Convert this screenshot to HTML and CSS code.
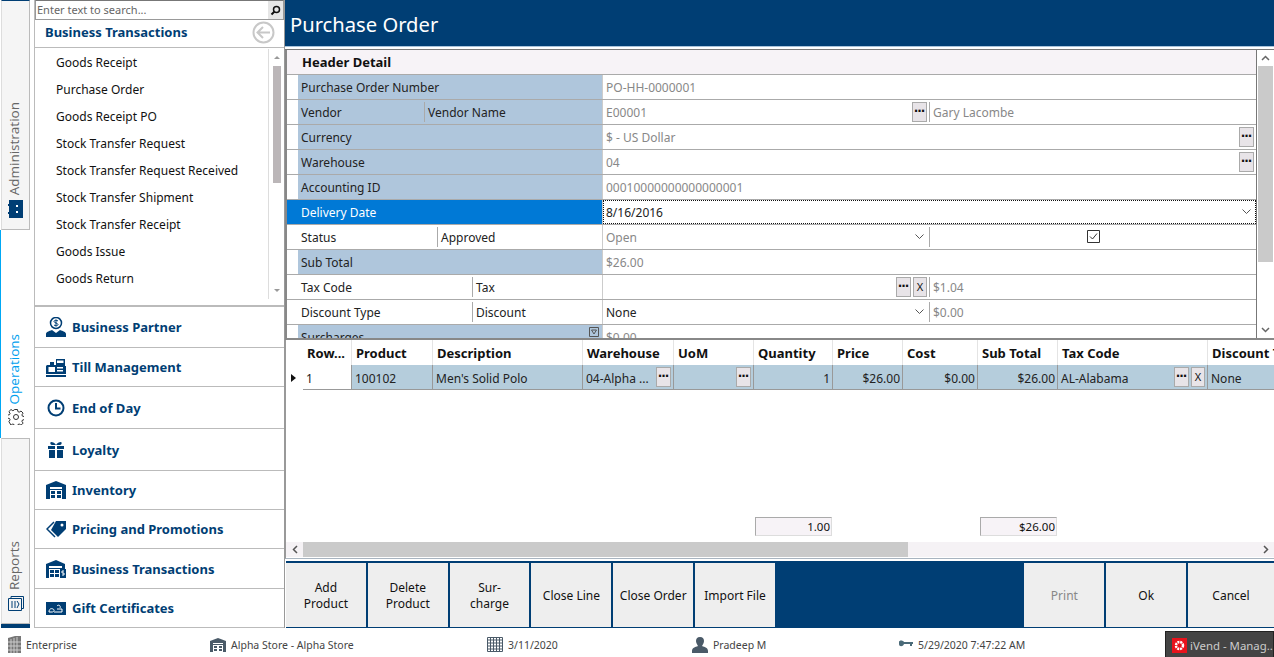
FILE: index.html
```html
<!DOCTYPE html>
<html lang="en">
<head>
<meta charset="utf-8">
<title>Purchase Order</title>
<link rel="stylesheet" href="styles.css">
</head>
<body>
<div class="app">
  <nav class="rail">
    <div class="tab tab-admin">
      <svg class="tab-icon" width="15" height="18" viewBox="0 0 15 18"><path fill="#003e74" d="M1 0h14v18H1z"/><path fill="#003e74" d="M0 4h2v2H0zM0 12h2v2H0z"/><path fill="#fff" d="M8 5h2v2H8zM8 11h2v2H8z"/></svg>
      <span class="tab-label">Administration</span>
    </div>
    <div class="tab-active">
      <svg class="tab-icon" width="16" height="16" viewBox="0 0 16 16" fill="none" stroke="#333"><circle cx="8" cy="8" r="2.500"/><path d="M6.500.5h3l.4 2.100 1.300.6 1.800-1.200 2.100 2.100-1.200 1.800.6 1.300 2 .4v3l-2 .4-.6 1.300 1.200 1.800-2.100 2.100-1.800-1.200-1.300.6-.4 1.800h-3l-.4-1.800-1.300-.6-1.800 1.200L.9 12.600l1.200-1.800-.6-1.300-2-.4v-3l2-.4.6-1.300L.9 2.600 3 .5l1.800 1.200 1.300-.6z"/></svg>
      <span class="tab-label tab-label-active">Operations</span>
    </div>
    <div class="tab tab-reports">
      <svg class="tab-icon" width="16" height="15" viewBox="0 0 16 15" fill="none" stroke="#003e74"><path d="M.5 2.500h13v12H.5zM3 2.500V.5h12.500v12H14"/><path d="M4 5v7M7 5v7M9 5l2 3-2 4"/></svg>
      <span class="tab-label">Reports</span>
    </div>
    <div class="rail-end"></div>
  </nav>

  <aside class="side">
    <div class="search">
      <span class="search-text">Enter text to search...</span>
      <span class="search-btn"><svg width="11" height="11" viewBox="0 0 11 11" fill="none" stroke="#111" stroke-width="1.500"><circle cx="6.500" cy="4.500" r="3"/><path d="M4.500 6.500 1.500 9.500" stroke-width="2"/></svg></span>
    </div>
    <div class="side-head">
      <span class="side-title">Business Transactions</span>
      <svg class="back" width="23" height="23" viewBox="0 0 23 23" fill="none" stroke="#c8c8c8" stroke-width="2"><circle cx="11.500" cy="11.500" r="10"/><path d="M18 11.500H6M11 6l-5.500 5.500L11 17"/></svg>
    </div>
    <div class="side-list">
      <ul class="items">
        <li>Goods Receipt</li>
        <li>Purchase Order</li>
        <li>Goods Receipt PO</li>
        <li>Stock Transfer Request</li>
        <li>Stock Transfer Request Received</li>
        <li>Stock Transfer Shipment</li>
        <li>Stock Transfer Receipt</li>
        <li>Goods Issue</li>
        <li>Goods Return</li>
      </ul>
      <div class="vscroll">
        <span class="tri tri-up"></span>
        <span class="vthumb"></span>
        <span class="tri tri-down"></span>
      </div>
    </div>
    <div class="accordion">
      <div class="acc"><svg width="20" height="20" viewBox="0 0 20 20"><path fill="#003e74" d="M0 20v-3c0-2 3-3 6-4l4 3 4-3c3 1 6 2 6 4v3z"/><circle cx="10" cy="6" r="5.500" fill="none" stroke="#003e74" stroke-width="1.500"/><path fill="none" stroke="#003e74" d="M12 4c-1-1-4-1-4 .5S12 6 12 7.500 9 9 8 8M10 2.500v7"/></svg><span>Business Partner</span></div>
      <div class="acc"><svg width="20" height="19" viewBox="0 0 20 19"><path fill="#003e74" d="M1 7h3V4h4v3h2V1h9v7h1v8H0V8zM0 17h20v2H0z"/><path fill="#fff" d="M11 2.500h6.500V5H11zM2.500 9H9v5H2.500zM11 9h6v1.500h-6zM11 12h6v1.500h-6z"/></svg><span>Till Management</span></div>
      <div class="acc"><svg width="18" height="18" viewBox="0 0 18 18" class="acc-clock" fill="none" stroke="#003e74" stroke-width="2"><circle cx="9" cy="9" r="7.500"/><path d="M9 4v5.500h4.500"/></svg><span>End of Day</span></div>
      <div class="acc"><svg width="16" height="16" viewBox="0 0 16 16" class="acc-gift"><path fill="#003e74" d="M0 4h7v3H0zM9 4h7v3H9zM1 8h6v8H1zM9 8h6v8H9zM3 0c2 0 4 1 5 3 1-2 3-3 5-3 1 0 1 3-1 3H4C2 3 2 0 3 0z"/></svg><span>Loyalty</span></div>
      <div class="acc"><svg width="20" height="18" viewBox="0 0 20 18"><path fill="#003e74" d="M10 0l10 4v14H0V4z"/><path fill="#fff" d="M4 6h12v2H4zM4 9h12v9H4z"/><path fill="#003e74" d="M5 10h4v3H5zM11 10h4v3h-4zM5 14h4v3H5zM11 14h4v3h-4z"/></svg><span>Inventory</span></div>
      <div class="acc"><svg width="20" height="17" viewBox="0 0 20 17"><path fill="#003e74" d="M10 0h10v8l-8 8-7-7z"/><circle cx="16" cy="4" r="1.500" fill="#fff"/><path fill="none" stroke="#003e74" stroke-width="1.500" d="M8 1 1 8l8 8"/></svg><span>Pricing and Promotions</span></div>
      <div class="acc"><svg width="20" height="18" viewBox="0 0 20 18"><path fill="#003e74" d="M10 0l9 4v5h1v9H0V4z"/><path fill="#fff" d="M3 6h13v2H3zM3 9h11v9H3z"/><path fill="#003e74" d="M4 10h4v3H4zM9 10h4v3H9zM4 14h4v3H4zM9 14h4v3H9z"/><path fill="none" stroke="#fff" d="M18 11h-2v2h2v2h-2"/></svg><span>Business Transactions</span></div>
      <div class="acc"><svg width="20" height="13" viewBox="0 0 20 13"><path fill="#003e74" d="M0 0h20v13H0z"/><path fill="none" stroke="#fff" d="M3 10c0-3 2-4 4-3s1 3-1 3H3zM8 10h8V7h-5M11 4c2-2 4 0 3 2"/></svg><span>Gift Certificates</span></div>
    </div>
  </aside>

  <main class="main">
    <h1 class="title">Purchase Order</h1>
    <div class="title-line"></div>

    <section class="form-wrap">
      <div class="form">
        <div class="form-head">Header Detail</div>
        <div class="row"><div class="lab shade">Purchase Order Number</div><div class="val"><span class="val-main">PO-HH-0000001</span></div></div>
        <div class="row">
          <div class="lab shade lab-split"><span class="part-vendor">Vendor</span><span class="part-b">Vendor Name</span></div>
          <div class="val val-split"><span class="val-main">E00001</span><span class="dots">···</span><span class="val-side">Gary Lacombe</span></div>
        </div>
        <div class="row"><div class="lab shade">Currency</div><div class="val"><span class="val-main">$ - US Dollar</span><span class="dots">···</span></div></div>
        <div class="row"><div class="lab shade">Warehouse</div><div class="val"><span class="val-main">04</span><span class="dots">···</span></div></div>
        <div class="row"><div class="lab shade">Accounting ID</div><div class="val"><span class="val-main">00010000000000000001</span></div></div>
        <div class="row row-sel">
          <div class="lab lab-sel">Delivery Date</div>
          <div class="val val-focus"><span class="val-main val-dark">8/16/2016</span><svg class="chev" width="9" height="5" viewBox="0 0 9 5" fill="none" stroke="#555"><path d="M.5.5l4 4 4-4"/></svg></div>
        </div>
        <div class="row">
          <div class="lab lab-split"><span class="part-status">Status</span><span class="part-b">Approved</span></div>
          <div class="val val-split"><span class="val-main">Open</span><svg class="chev" width="9" height="5" viewBox="0 0 9 5" fill="none" stroke="#555"><path d="M.5.5l4 4 4-4"/></svg><span class="val-side val-check"><svg width="13" height="13" viewBox="0 0 13 13" fill="none" stroke="#333"><path d="M.5.5h12v12H.5z"/><path d="M3 6.500l2.500 2.500L10 3.500"/></svg></span></div>
        </div>
        <div class="row"><div class="lab shade">Sub Total</div><div class="val"><span class="val-main">$26.00</span></div></div>
        <div class="row">
          <div class="lab lab-split"><span class="part-tax">Tax Code</span><span class="part-b">Tax</span></div>
          <div class="val val-split"><span class="val-main"></span><span class="dots">···</span><span class="xbtn">X</span><span class="val-side">$1.04</span></div>
        </div>
        <div class="row">
          <div class="lab lab-split"><span class="part-tax">Discount Type</span><span class="part-b">Discount</span></div>
          <div class="val val-split"><span class="val-main val-dark">None</span><svg class="chev" width="9" height="5" viewBox="0 0 9 5" fill="none" stroke="#555"><path d="M.5.5l4 4 4-4"/></svg><span class="val-side">$0.00</span></div>
        </div>
        <div class="row">
          <div class="lab shade lab-filter">Surcharges<svg class="filter" width="10" height="10" viewBox="0 0 10 10" fill="none" stroke="#555"><path d="M.5.5h9v9h-9zM2.500 3h5L5 7z"/></svg></div>
          <div class="val"><span class="val-main">$0.00</span></div>
        </div>
      </div>
      <div class="form-scroll">
        <svg width="9" height="6" viewBox="0 0 9 6" fill="none" stroke="#666" stroke-width="1.500"><path d="M1 5l3.500-3.500L8 5"/></svg>
        <span class="form-thumb"></span>
        <svg class="form-scroll-down" width="9" height="6" viewBox="0 0 9 6" fill="none" stroke="#666" stroke-width="1.500"><path d="M1 1l3.500 3.500L8 1"/></svg>
      </div>
    </section>

    <section class="table-wrap">
      <div class="tbl tbl-head">
        <div class="th th-gutter"></div>
        <div class="th">Row...</div>
        <div class="th">Product</div>
        <div class="th">Description</div>
        <div class="th">Warehouse</div>
        <div class="th">UoM</div>
        <div class="th">Quantity</div>
        <div class="th">Price</div>
        <div class="th">Cost</div>
        <div class="th">Sub Total</div>
        <div class="th">Tax Code</div>
        <div class="th">Discount Type</div>
      </div>
      <div class="tbl tbl-row">
        <div class="td-gutter"><span class="marker"></span></div>
        <div class="td td-white">1</div>
        <div class="td">100102</div>
        <div class="td">Men's Solid Polo</div>
        <div class="td td-btn"><span class="td-grow">04-Alpha ...</span><span class="dots">···</span></div>
        <div class="td td-btn"><span class="td-grow"></span><span class="dots">···</span></div>
        <div class="td td-num">1</div>
        <div class="td td-num">$26.00</div>
        <div class="td td-num">$0.00</div>
        <div class="td td-num">$26.00</div>
        <div class="td td-btn"><span class="td-grow">AL-Alabama</span><span class="dots">···</span><span class="xbtn">X</span></div>
        <div class="td">None</div>
      </div>
      <div class="tbl-space"></div>
      <div class="tbl tbl-totals">
        <div class="total total-qty">1.00</div>
        <div class="total total-sub">$26.00</div>
      </div>
      <div class="hscroll">
        <span class="harrow"><svg width="6" height="9" viewBox="0 0 6 9" fill="none" stroke="#555" stroke-width="1.500"><path d="M5 1 1.500 4.500 5 8"/></svg></span>
        <span class="hthumb"></span>
        <span class="htrack"><svg width="6" height="9" viewBox="0 0 6 9" fill="none" stroke="#555" stroke-width="1.500"><path d="M1 1l3.500 3.500L1 8"/></svg></span>
      </div>
    </section>

    <div class="toolbar">
      <button class="tbtn">Add<br>Product</button>
      <button class="tbtn">Delete<br>Product</button>
      <button class="tbtn">Sur-<br>charge</button>
      <button class="tbtn">Close Line</button>
      <button class="tbtn">Close Order</button>
      <button class="tbtn">Import File</button>
      <span class="tool-gap"></span>
      <button class="tbtn tbtn-off">Print</button>
      <button class="tbtn">Ok</button>
      <button class="tbtn tbtn-last">Cancel</button>
    </div>
  </main>

  <footer class="status">
    <div class="stat"><svg width="13" height="17" viewBox="0 0 13 17"><path fill="#777" d="M0 2l7-2h6v17H0z"/><path stroke="#ccc" d="M3 3v14M6 2v15M9 1v16M0 6h13M0 10h13M0 14h13"/></svg><span>Enterprise</span></div>
    <div class="stat"><svg width="16" height="14" viewBox="0 0 16 14"><path fill="#4a5a68" d="M8 0l8 3v11H0V3z"/><path fill="#fff" d="M3 5h10v1H3zM3 7h10v7H3z"/><path fill="#4a5a68" d="M4 8h3v2H4zM9 8h3v2H9zM4 11h3v2H4zM9 11h3v2H9z"/></svg><span>Alpha Store - Alpha Store</span></div>
    <div class="stat"><svg width="16" height="15" viewBox="0 0 16 15" fill="none" stroke="#4a5a68"><path d="M.5.5h15v14H.5z"/><path d="M.5 3h15M.5 6h15M.5 9h15M.5 12h15M3.500 .5v14M6.500 .5v14M9.500 .5v14M12.500 .5v14"/></svg><span>3/11/2020</span></div>
    <div class="stat"><svg width="16" height="16" viewBox="0 0 16 16"><path fill="#4a5a68" d="M8 0c3 0 4 2 4 4s-1 3-2 5c3 1 6 2 6 5v2H0v-2c0-3 3-4 6-5-1-2-2-3-2-5s1-4 4-4z"/></svg><span>Pradeep M</span></div>
    <div class="stat"><svg width="14" height="9" viewBox="0 0 14 9"><path fill="#4a6a78" d="M0 2c0-2 4-2 5 0h9v2h-1v2h-2V4H5c-1 3-5 3-5 0z"/></svg><span>5/29/2020 7:47:22 AM</span></div>
    <div class="task">
      <svg class="task-icon" width="15" height="15" viewBox="0 0 15 15"><path fill="#e8131c" d="M0 0h15v15H0z"/><circle cx="7.500" cy="7.500" r="3.500" fill="none" stroke="#fff" stroke-width="2.500" stroke-dasharray="2 .8"/></svg>
      <span>iVend - Manag...</span>
    </div>
  </footer>
</div>
</body>
</html>
```
FILE: styles.css
```css
* { box-sizing: border-box; }
html, body { margin: 0; padding: 0; height: 100%; overflow: hidden; background: #fff; }
body { font: 12px "Noto Sans", sans-serif; color: #111; }

.app {
  width: 1274px; height: 657px;
  display: grid;
  grid-template-columns: 34px 251px 989px;
  grid-template-rows: 628px 29px;
}

/* rail */
.rail { display: flex; flex-direction: column; background: #fff; }
.tab {
  width: 29px; margin-left: 1px;
  background: #f5f5f5;
  border: 1px solid #bbb; border-left-color: #ddd;
  display: flex; flex-direction: column-reverse; align-items: center; gap: 5px;
  padding-bottom: 11px;
}
.tab-admin { height: 230px; border-top: 1px solid #003e74; }
.tab-reports { height: 186px; padding-bottom: 12px; gap: 6px; }
.tab-active {
  width: 30px; height: 208px;
  border-left: 1px solid #00a8f5;
  display: flex; flex-direction: column-reverse; align-items: center; gap: 5px;
  padding-bottom: 13px;
}
.tab-icon { flex: none; }
.tab-label {
  writing-mode: vertical-rl; transform: rotate(180deg);
  font: 400 13.500px "Open Sans", sans-serif; color: #666;
  margin-right: 3px;
}
.tab-label-active { color: #00a0ee; }
.rail-end { width: 29px; margin-left: 1px; height: 4px; background: #003e74; }

/* side */
.side { display: flex; flex-direction: column; border-left: 1px solid #bbb; border-right: 1px solid #999; }
.search { height: 20px; display: flex; border: 1px solid #999; border-top-color: #777; }
.search-text { flex: 1; padding-left: 1px; line-height: 18px; color: #666; font-size: 11px; }
.search-btn { width: 15px; background: #e6e6e6; display: flex; align-items: center; justify-content: center; }
.side-head {
  height: 28px; display: flex; align-items: center; justify-content: space-between;
  padding: 0 9px 2px 10px; border-bottom: 1px solid #bbb;
}
.side-title { font-weight: 700; font-size: 13px; color: #003e74; margin-bottom: 2px; }
.side-list { height: 259px; display: flex; padding-top: 1px; border-bottom: 2px solid #bbb; }
.items { flex: 1; list-style: none; margin: 0; padding: 0 0 0 21px; }
.items li { height: 27px; line-height: 27px; }
.vscroll {
  width: 16px; height: 250px;
  display: flex; flex-direction: column; align-items: center;
  border-left: 1px solid #ddd;
}
.tri { width: 0; height: 0; border-left: 3px solid transparent; border-right: 3px solid transparent; margin: 7px 0; }
.tri-up { border-bottom: 3px solid #999; }
.tri-down { border-top: 3px solid #999; margin-top: auto; }
.vthumb { width: 8px; height: 117px; background: #bbb6b8; }
.accordion {
  flex: 1; display: grid;
  grid-template-rows: 41px 39px 42px 42px 39px 39px 40px 39px;
}
.acc {
  display: flex; align-items: center; gap: 6px;
  padding-left: 11px;
  border-bottom: 1px solid #bbb;
  font-weight: 700; font-size: 13px; color: #003e74;
}
.acc-clock { margin: 0 1px; }
.acc-gift { margin: 0 2px; }

/* main */
.main { display: flex; flex-direction: column; min-width: 0; }
.title {
  margin: 0; height: 46px; padding-left: 5px;
  background: #003e74; color: #fff;
  font: 400 20.200px/49px "Noto Sans", sans-serif;
}
.title-line { height: 3px; background: linear-gradient(#a9c4dc 1px, #fff 1px); }

.form-wrap { height: 291px; display: flex; border-top: 1px solid #777; border-bottom: 2px solid #888; }
.form { width: 972px; flex: none; overflow: hidden; border-left: 2px solid #888; border-right: 1px solid #777; }
.form-head {
  height: 25px; padding-left: 15px; line-height: 24px;
  background: #f7f3f7; font-weight: 700; font-size: 13px;
  border-bottom: 1px solid #aaa;
}
.row { height: 25px; display: flex; border-bottom: 1px solid #aaa; }
.lab {
  width: 316px; flex: none; height: 24px; line-height: 26px;
  padding-left: 14px; border-right: 1px solid #ccc;
  display: flex; color: #222;
}
.shade { background: linear-gradient(90deg, #fff 11px, #afc6dc 11px); }
.lab-sel { background: #0079d6; color: #fff; }
.lab-split span { display: block; height: 20px; line-height: 22px; margin-top: 2px; }
.part-vendor { width: 123px; }
.part-status { width: 136px; }
.part-tax { width: 171px; }
.part-b { border-left: 1px solid #aaa; padding-left: 3px; }
.lab-filter { position: relative; }
.filter { position: absolute; right: 3px; top: 2px; }
.val {
  flex: 1; min-width: 0; display: flex; align-items: center;
  padding: 0 2px 1px 3px; color: #888;
}
.val-main { flex: 1; padding-top: 2px; }
.val-dark { color: #222; }
.val-focus { outline: 1px dotted #111; outline-offset: -1px; padding-right: 5px; }
.val-split .val-side {
  flex: none; width: 325px; height: 20px; line-height: 22px; margin-left: 2px;
  padding-left: 3px; border-left: 1px solid #aaa;
}
.val-check { display: flex; align-items: center; justify-content: center; }
.val-split .chev { margin-right: 3px; }
.dots, .xbtn {
  flex: none; height: 20px; background: #e8e4e8; border: 1px solid #aaa;
  color: #111; text-align: center;
}
.dots { width: 15px; font: 700 12px/17px "DejaVu Sans", sans-serif; letter-spacing: -1px; padding-right: 1px; }
.xbtn { width: 14px; margin-left: 2px; font-weight: 400; line-height: 17px; font-size: 11px; }
.form-scroll {
  flex: 1; display: flex; flex-direction: column; align-items: center;
  padding: 5px 1px; background: #fff;
}
.form-thumb { width: 15px; height: 196px; background: #cacaca; margin-top: 5px; }
.form-scroll-down { margin-top: auto; }

/* table */
.table-wrap { height: 219px; display: flex; flex-direction: column; border-left: 1px solid #999; border-bottom: 1px solid #a8b4c0; overflow: hidden; }
.tbl {
  display: grid;
  grid-template-columns: 17px 49px 81px 150px 91px 80px 79px 70px 75px 80px 150px 120px;
  width: 1042px;
}
.tbl-head { height: 25px; }
.th {
  padding-left: 4px; line-height: 27px; font-weight: 700; font-size: 13px;
  color: #111; border-right: 1px solid #e4e4e4; white-space: nowrap;
}
.th-gutter { border-right: 0; }
.tbl-row { height: 25px; }
.td-gutter { display: flex; align-items: center; padding-left: 5px; }
.marker { width: 0; height: 0; border-left: 5px solid #111; border-top: 4px solid transparent; border-bottom: 4px solid transparent; }
.td {
  background: #b5cddc; border-right: 1px solid #999; border-bottom: 1px solid #999;
  height: 25px; line-height: 27px; padding: 0 2px 0 3px; color: #222;
  white-space: nowrap; overflow: hidden;
}
.td-white { background: #fff; }
.td-num { text-align: right; }
.td-btn { display: flex; align-items: center; padding-right: 2px; }
.td-grow { flex: 1; min-width: 0; padding-top: 3px; line-height: 20px; }
.tbl-space { flex: 1; }
.tbl-totals { height: 25px; padding-bottom: 6px; }
.total {
  background: #f7f3f7; text-align: right; padding-right: 1px; line-height: 17px; font-size: 11.500px;
  border: 1px solid #ddd; border-top-color: #aaa; border-left-color: #aaa;
  width: 77px; margin-left: 1px;
}
.total-qty { grid-column: 7; }
.total-sub { grid-column: 10; margin-left: 2px; }
.hscroll { height: 15px; display: flex; margin-bottom: 1px; }
.harrow { width: 17px; background: #f5f2f5; display: flex; align-items: center; justify-content: center; }
.hthumb { width: 605px; background: #cacaca; }
.htrack { flex: 1; background: #f5f2f5; display: flex; align-items: center; justify-content: flex-end; padding-right: 5px; }

/* toolbar */
.toolbar { height: 67px; margin-top: 2px; margin-left: 1px; padding: 2px 0 1px; background: #003e74; display: flex; gap: 2px; }
.tbtn {
  width: 80px; border: 0; padding: 2px 0 0; background: #eee; color: #111;
  font: 12px/16px "Noto Sans", sans-serif;
}
.tbtn-off { color: #888; }
.tbtn-last { width: 86px; }
.tool-gap { width: 246px; }

/* status */
.status {
  grid-column: 1 / -1;
  display: grid;
  grid-template-columns: 202px 277px 205px 207px 1fr;
  padding: 4px 0 0 8px; align-items: center; position: relative;
  color: #444; font-size: 10.500px;
}
.stat { display: flex; align-items: center; gap: 5px; }
.task {
  position: absolute; right: 0; top: 3px; width: 109px; height: 26px;
  background: #444; color: #ccc; border: 1px solid #222; border-bottom: 0;
  display: flex; align-items: center; gap: 3px; padding: 2px 0 0 6px; font-size: 11.400px; white-space: nowrap; overflow: hidden;
}
.task-icon { flex: none; }
```
